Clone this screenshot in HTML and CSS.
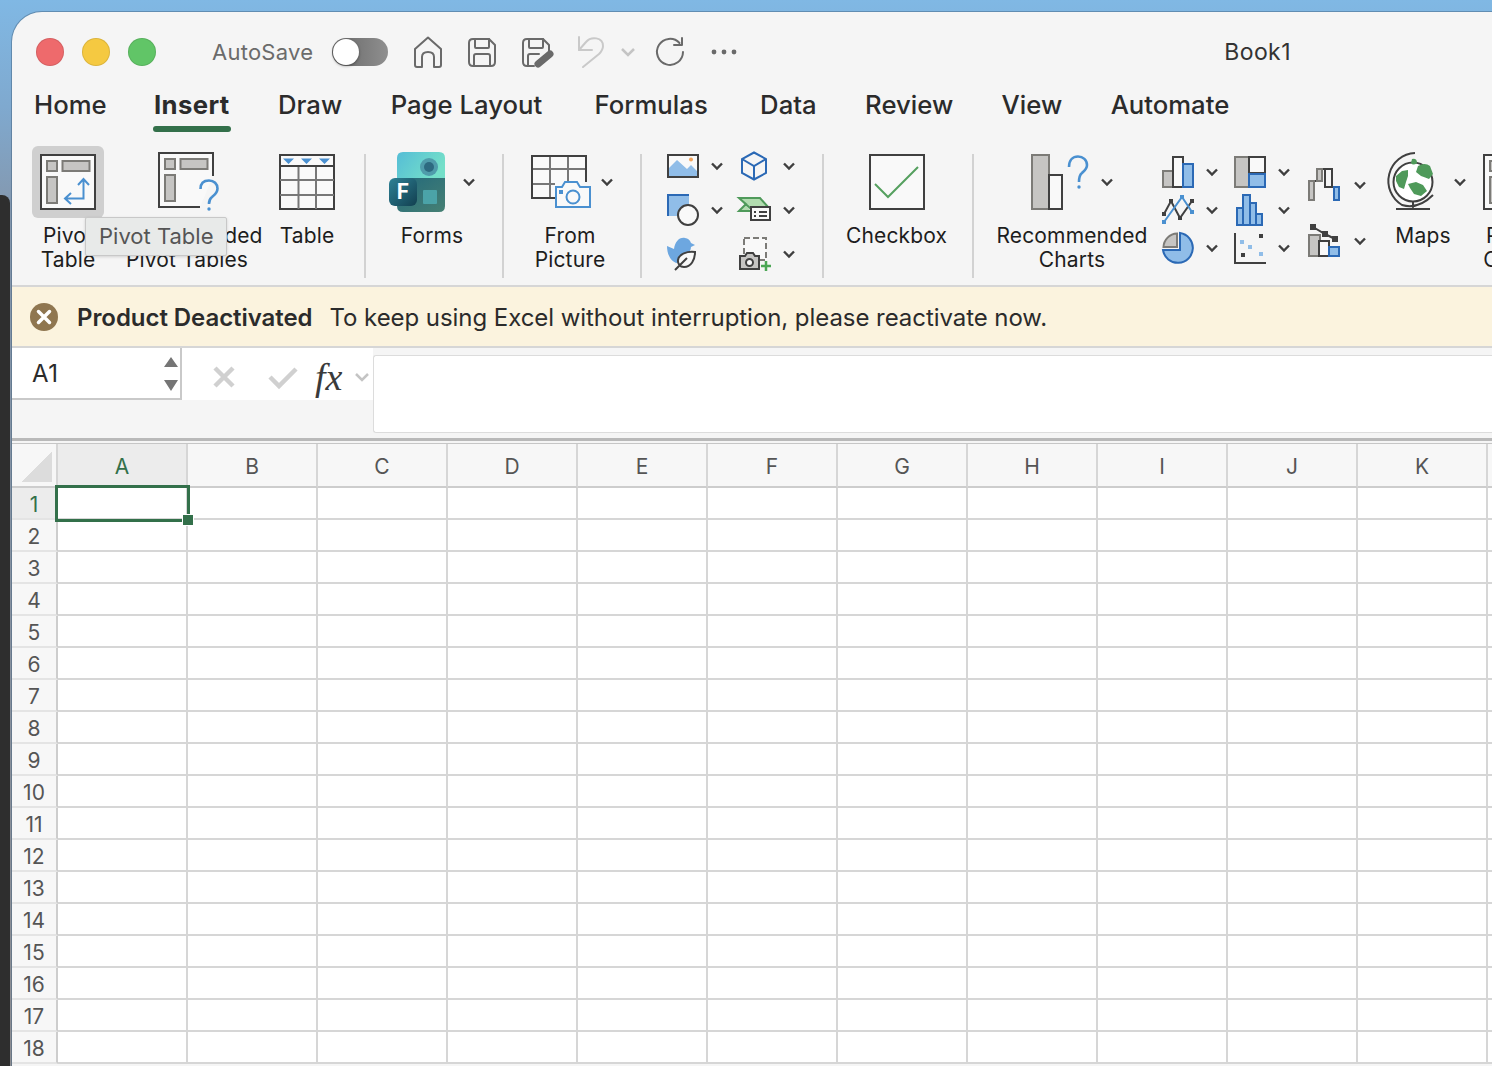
FILE: index.html
```html
<!DOCTYPE html>
<html lang="en">
<head>
    <meta charset="UTF-8">
    <title>Book1</title>
    <link rel="stylesheet" href="styles.css">
</head>
<body>
    <div class="dock-edge"></div>
    <div class="window">
        <div class="titlebar">
            <span class="light red"></span>
            <span class="light yellow"></span>
            <span class="light green"></span>
            <span class="autosave">AutoSave</span>
            <span class="toggle"><span class="knob"></span></span>
            <svg class="qa qa-home" width="30" height="32" viewBox="0 0 30 32"><path d="M2 13L15 1.500L28 13V29Q28 31 26 31H21V21Q21 16 15 16Q9 16 9 21V31H4Q2 31 2 29Z"/></svg>
            <svg class="qa qa-save" width="30" height="30" viewBox="0 0 30 30"><path d="M6 2H22L28 8V25Q28 29 24 29H6Q2 29 2 25V6Q2 2 6 2Z"/><path d="M8 2V10Q8 11 9 11H21Q22 11 22 10V2M7 29V19Q7 17 9 17H21Q23 17 23 19V29"/></svg>
            <svg class="qa qa-saveas" width="32" height="30" viewBox="0 0 32 30"><path d="M6 2H22L28 8V14M13 29H6Q2 29 2 25V6Q2 2 6 2"/><path d="M8 2V10Q8 11 9 11H21Q22 11 22 10V2M7 29V19Q7 17 9 17H18"/><path class="pen" d="M17 27L29 17"/></svg>
            <svg class="qa qa-undo" width="30" height="32" viewBox="0 0 30 32"><path d="M2 1V14H15"/><path d="M2 14L9 6C14 0 26 1 26 10C26 14 24 16 22 18L6 31"/></svg>
            <svg class="chev-light qa-undomore" width="16" height="10" viewBox="0 0 16 10"><path d="M2 2L8 8L14 2"/></svg>
            <svg class="qa qa-redo" width="30" height="30" viewBox="0 0 30 30"><path d="M24.500 6A13 13 0 1 0 28 15"/><path d="M27 1V8H19"/></svg>
            <svg class="qa-more" width="28" height="6" viewBox="0 0 28 6"><circle cx="4" cy="3" r="2.400"/><circle cx="14" cy="3" r="2.400"/><circle cx="24" cy="3" r="2.400"/></svg>
            <span class="doc-title">Book1</span>
        </div>

        <nav class="tabs">
            <span class="tab">Home</span>
            <span class="tab active">Insert</span>
            <span class="tab">Draw</span>
            <span class="tab">Page Layout</span>
            <span class="tab tab-wide">Formulas</span>
            <span class="tab tab-wide">Data</span>
            <span class="tab">Review</span>
            <span class="tab">View</span>
            <span class="tab">Automate</span>
        </nav>

        <div class="ribbon">
            <div class="group group-tables">
                <div class="btn btn-pivot">
                    <div class="btn-icon hovered">
                        <svg width="56" height="56" viewBox="0 0 56 56">
                            <rect class="frame" x="1" y="1" width="54" height="54"/>
                            <rect class="block" x="7" y="7" width="10" height="10"/>
                            <rect class="block" x="22.500" y="7" width="27" height="10"/>
                            <rect class="block" x="7" y="23" width="10" height="26"/>
                            <path class="blue-line" d="M43.500 26V44.500H26M38 31L43.500 25L49 31M31 39L25 44.500L31 50"/>
                        </svg>
                    </div>
                    <div class="label">Pivot<br>Table</div>
                </div>
                <div class="btn btn-rec-pivot">
                    <div class="btn-icon">
                        <svg width="62" height="60" viewBox="0 0 62 60">
                            <path class="frame" d="M42 55H1V1H55V24"/>
                            <rect class="block" x="7" y="7" width="10" height="10"/>
                            <rect class="block" x="22.500" y="7" width="27" height="10"/>
                            <rect class="block" x="7" y="23" width="10" height="26"/>
                            <path class="blue-line thick" d="M42.500 37C42.500 31 46 28.500 51 28.500C56 28.500 59.500 32 59.500 36.500C59.500 41 56.500 43 54 45C52 46.500 51 48.500 51 52"/>
                            <circle class="blue-dot" cx="51" cy="57" r="1.700"/>
                        </svg>
                    </div>
                    <div class="label">Recommended<br>Pivot Tables</div>
                </div>
                <div class="btn btn-table">
                    <div class="btn-icon">
                        <svg width="56" height="56" viewBox="0 0 56 56">
                            <rect class="frame" x="1" y="1" width="54" height="54"/>
                            <path class="grid-line" d="M19.500 12V55M37 12V55M1 26H55M1 41H55"/>
                            <path class="frame" d="M1 12H55"/>
                            <path class="blue-dot" d="M4 4.500H15L9.500 10ZM22 4.500H33L27.500 10ZM40 4.500H51L45.500 10Z"/>
                        </svg>
                    </div>
                    <div class="label">Table</div>
                </div>
            </div>
            <div class="sep"></div>

            <div class="group group-forms">
                <div class="btn">
                    <div class="btn-icon with-chev">
                        <svg width="56" height="60" viewBox="0 0 56 60">
                            <defs>
                                <linearGradient id="formsTop" x1="0" y1="0" x2="1" y2="0.4"><stop offset="0" stop-color="#55bdd6"/><stop offset="1" stop-color="#74dfc9"/></linearGradient>
                                <linearGradient id="formsBottom" x1="0" y1="0" x2="1" y2="1"><stop offset="0" stop-color="#23697c"/><stop offset="1" stop-color="#468073"/></linearGradient>
                                <linearGradient id="formsTile" x1="0" y1="0" x2="1" y2="1"><stop offset="0" stop-color="#2e8296"/><stop offset="1" stop-color="#123f50"/></linearGradient>
                            </defs>
                            <path fill="url(#formsBottom)" d="M8 26H56V54Q56 60 50 60H14Q8 60 8 54Z"/>
                            <path fill="url(#formsTop)" d="M14 0H50Q56 0 56 6V26H8V6Q8 0 14 0Z"/>
                            <circle cx="40" cy="15" r="9" fill="#4f9cab"/>
                            <circle cx="40" cy="15" r="5" fill="#2d6a80"/>
                            <rect x="34" y="38" width="14" height="14" rx="1" fill="#4ba3a8"/>
                            <rect x="0" y="26" width="28" height="28" rx="6" fill="url(#formsTile)"/>
                            <text class="forms-letter" x="14" y="47" text-anchor="middle">F</text>
                        </svg>
                        <svg class="chev" width="12" height="8" viewBox="0 0 12 8"><path d="M1 1.500L6 6.500L11 1.500"/></svg>
                    </div>
                    <div class="label">Forms</div>
                </div>
            </div>
            <div class="sep"></div>

            <div class="group group-picture">
                <div class="btn">
                    <div class="btn-icon with-chev chev-near">
                        <svg width="60" height="54" viewBox="0 0 60 54">
                            <path class="frame" d="M24 43H1V1H55V27"/>
                            <path class="grid-line" d="M19 2V42M37 2V27M2 14H54M2 29H24"/>
                            <path class="frame-line" d="M24 43H1V1H55V27"/>
                            <path class="camera" d="M25 32H31L34 27H46L49 32H59V52H25Z"/>
                            <circle class="camera" cx="42" cy="42" r="6.500"/>
                            <rect class="blue-dot" x="28" y="35" width="4" height="4"/>
                        </svg>
                        <svg class="chev" width="12" height="8" viewBox="0 0 12 8"><path d="M1 1.500L6 6.500L11 1.500"/></svg>
                    </div>
                    <div class="label">From<br>Picture</div>
                </div>
            </div>
            <div class="sep"></div>

            <div class="group group-media">
                <div class="mini">
                    <svg width="32" height="32" viewBox="0 0 32 32">
                        <rect class="frame" x="1" y="5" width="30" height="22"/>
                        <path class="blue-fill" d="M2 25V18L10 10L20 19L24 15L30 21V26H2Z"/>
                        <circle class="orange" cx="24" cy="9.500" r="2"/>
                    </svg>
                    <svg class="chev" width="12" height="8" viewBox="0 0 12 8"><path d="M1 1.500L6 6.500L11 1.500"/></svg>
                </div>
                <div class="mini">
                    <svg width="32" height="32" viewBox="0 0 32 32">
                        <path class="blue-line dark" d="M15 2.500L27 9V23L15 29.500L3 23V9ZM3 9L15 16L27 9M15 16V29.500"/>
                    </svg>
                    <svg class="chev" width="12" height="8" viewBox="0 0 12 8"><path d="M1 1.500L6 6.500L11 1.500"/></svg>
                </div>
                <div class="mini">
                    <svg width="32" height="32" viewBox="0 0 32 32">
                        <path class="blue-fill" d="M1 1H22V22H1Z"/>
                        <path class="blue-line dark" d="M1 22V1H22"/>
                        <circle class="frame" cx="21" cy="21" r="10"/>
                    </svg>
                    <svg class="chev" width="12" height="8" viewBox="0 0 12 8"><path d="M1 1.500L6 6.500L11 1.500"/></svg>
                </div>
                <div class="mini">
                    <svg width="32" height="32" viewBox="0 0 32 32">
                        <path class="green-fill" d="M0 4H21L30 14H11ZM0 4L7 10L0 17H12"/>
                        <rect class="frame" x="12" y="13" width="19" height="13"/>
                        <path class="frame" d="M15 18H17M20 18H28M15 22H17M20 22H28"/>
                    </svg>
                    <svg class="chev" width="12" height="8" viewBox="0 0 12 8"><path d="M1 1.500L6 6.500L11 1.500"/></svg>
                </div>
                <div class="mini">
                    <svg width="32" height="34" viewBox="0 0 32 34">
                        <path class="blue-solid" d="M0 9L7 12C8 5 12 0 18 1C21 1.500 23 3 24 6L28 8L24 10C24 13 22 16 19 18L10 26C5 25 0 19 0 9Z"/>
                        <path class="leaf" d="M28 15C20 14 12 17 11 23C10.500 27 13 30 17 30C24 30 28 23 28 15ZM8 33L20 21"/>
                    </svg>
                    <svg class="chev hidden" width="12" height="8" viewBox="0 0 12 8"><path d="M1 1.500L6 6.500L11 1.500"/></svg>
                </div>
                <div class="mini">
                    <svg width="32" height="34" viewBox="0 0 32 34">
                        <rect class="dashed" x="5" y="1" width="22" height="22"/>
                        <path class="gray-cam" d="M1 19H6L8 16H14L16 19H20V32H1Z"/>
                        <circle class="frame" cx="10.500" cy="25.500" r="3.500"/>
                        <path class="plus" d="M22 29H32M27 24V34"/>
                    </svg>
                    <svg class="chev" width="12" height="8" viewBox="0 0 12 8"><path d="M1 1.500L6 6.500L11 1.500"/></svg>
                </div>
            </div>
            <div class="sep"></div>

            <div class="group group-checkbox">
                <div class="btn">
                    <div class="btn-icon">
                        <svg width="56" height="56" viewBox="0 0 56 56">
                            <rect class="frame" x="1" y="1" width="54" height="54"/>
                            <path class="check" d="M6 30L19 43L49 13"/>
                        </svg>
                    </div>
                    <div class="label">Checkbox</div>
                </div>
            </div>
            <div class="sep"></div>

            <div class="group group-charts">
                <div class="btn btn-rec-charts">
                    <div class="btn-icon with-chev chev-close">
                        <svg width="59" height="56" viewBox="0 0 59 56">
                            <rect class="block" x="1" y="1" width="17" height="54"/>
                            <rect class="frame" x="18" y="21" width="13" height="34"/>
                            <path class="blue-line thick" d="M38 13C38 6 42 2.500 47 2.500C52 2.500 56 6 56 11C56 15 53 17 51 19C49 20.500 48 22.500 48 28"/>
                            <circle class="blue-dot" cx="48" cy="33" r="1.700"/>
                        </svg>
                        <svg class="chev" width="12" height="8" viewBox="0 0 12 8"><path d="M1 1.500L6 6.500L11 1.500"/></svg>
                    </div>
                    <div class="label">Recommended<br>Charts</div>
                </div>
                <div class="chart-grid">
                    <div class="mini">
                        <svg width="32" height="32" viewBox="0 0 32 32">
                            <rect class="block" x="1" y="15" width="10" height="16"/>
                            <rect class="frame" x="11" y="1" width="10" height="30"/>
                            <rect class="blue-box" x="21" y="8" width="10" height="23"/>
                        </svg>
                        <svg class="chev" width="12" height="8" viewBox="0 0 12 8"><path d="M1 1.500L6 6.500L11 1.500"/></svg>
                    </div>
                    <div class="mini">
                        <svg width="32" height="32" viewBox="0 0 32 32">
                            <rect class="block" x="1" y="1" width="14" height="30"/>
                            <rect class="frame" x="15" y="1" width="16" height="16"/>
                            <rect class="blue-box" x="15" y="18" width="16" height="13"/>
                        </svg>
                        <svg class="chev" width="12" height="8" viewBox="0 0 12 8"><path d="M1 1.500L6 6.500L11 1.500"/></svg>
                    </div>
                    <div class="mini">
                        <svg width="32" height="32" viewBox="0 0 32 32">
                            <path class="frame-line" d="M2 20L9 7L18 24L30 7"/>
                            <path class="blue-line" d="M2 28L20 3L30 18"/>
                            <path class="dark-dots" d="M0 18h4v4h-4zM7 5h4v4h-4zM16 22h4v4h-4zM28 5h4v4h-4z"/>
                            <path class="blue-dot" d="M0 26h4v4h-4zM18 1h4v4h-4zM28 16h4v4h-4z"/>
                        </svg>
                        <svg class="chev" width="12" height="8" viewBox="0 0 12 8"><path d="M1 1.500L6 6.500L11 1.500"/></svg>
                    </div>
                    <div class="mini">
                        <svg width="32" height="32" viewBox="0 0 32 32">
                            <rect class="blue-box" x="3" y="14" width="6" height="17"/>
                            <rect class="blue-box" x="9" y="1" width="7" height="30"/>
                            <rect class="blue-box" x="16" y="9" width="6" height="22"/>
                            <rect class="blue-box" x="22" y="20" width="6" height="11"/>
                        </svg>
                        <svg class="chev" width="12" height="8" viewBox="0 0 12 8"><path d="M1 1.500L6 6.500L11 1.500"/></svg>
                    </div>
                    <div class="mini">
                        <svg width="32" height="32" viewBox="0 0 32 32">
                            <path class="blue-box" d="M18 1A15 15 0 1 1 1 18H18Z"/>
                            <path class="block" d="M15 1.500A14 14 0 0 0 1.500 15H15Z"/>
                        </svg>
                        <svg class="chev" width="12" height="8" viewBox="0 0 12 8"><path d="M1 1.500L6 6.500L11 1.500"/></svg>
                    </div>
                    <div class="mini">
                        <svg width="32" height="32" viewBox="0 0 32 32">
                            <path class="frame-line" d="M1 1V31H32"/>
                            <path class="dark-dots" d="M25 2h4v4h-4zM7 21h4v4h-4z"/>
                            <path class="pale-dots" d="M6 8h4v4h-4zM14 13h4v4h-4zM25 20h4v4h-4z"/>
                        </svg>
                        <svg class="chev" width="12" height="8" viewBox="0 0 12 8"><path d="M1 1.500L6 6.500L11 1.500"/></svg>
                    </div>
                </div>
                <div class="chart-col">
                    <div class="mini">
                        <svg width="32" height="34" viewBox="0 0 32 34">
                            <path class="frame-line" d="M6 13H9M14 1H17M24 19H26"/>
                            <rect class="block" x="1" y="13" width="5" height="19"/>
                            <rect class="block" x="9" y="1" width="5" height="12"/>
                            <rect class="frame-line" x="17" y="1" width="7" height="18"/>
                            <rect class="blue-box" x="26" y="19" width="5" height="13"/>
                        </svg>
                        <svg class="chev" width="12" height="8" viewBox="0 0 12 8"><path d="M1 1.500L6 6.500L11 1.500"/></svg>
                    </div>
                    <div class="mini">
                        <svg width="32" height="34" viewBox="0 0 32 34">
                            <path class="frame-line" d="M5 3L17 10L27 15"/>
                            <path class="dark-dots" d="M2 0h6v6h-6zM14 7h6v6h-6zM24 12h6v6h-6z"/>
                            <rect class="block" x="1" y="11" width="11" height="21"/>
                            <rect class="frame" x="11" y="17" width="10" height="15"/>
                            <rect class="blue-box" x="21" y="23" width="10" height="9"/>
                        </svg>
                        <svg class="chev" width="12" height="8" viewBox="0 0 12 8"><path d="M1 1.500L6 6.500L11 1.500"/></svg>
                    </div>
                </div>
                <div class="btn btn-maps">
                    <div class="btn-icon with-chev">
                        <svg width="48" height="60" viewBox="0 0 48 60">
                            <circle class="globe" cx="25" cy="30" r="19.500"/>
                            <path class="land" d="M8 24L14 19L20 18L20 24L18 30L16 37L11 35L8 29ZM24 7Q29 6 29 11Q25 14 23 11ZM30 14Q37 10 42 14L45 22L41 27Q36 25 33 24L28 20ZM20 32L28 30L35 33L39 39L33 44L26 42L22 36Z"/>
                            <path class="frame-line" d="M27 1A28 28 0 0 0 14 53C24 56 35 53 45 43M25 49V57M8 57H42"/>
                        </svg>
                        <svg class="chev" width="12" height="8" viewBox="0 0 12 8"><path d="M1 1.500L6 6.500L11 1.500"/></svg>
                    </div>
                    <div class="label">Maps</div>
                </div>
                <div class="btn btn-pchart">
                    <div class="btn-icon">
                        <svg width="56" height="56" viewBox="0 0 56 56">
                            <rect class="frame" x="1" y="1" width="54" height="54"/>
                            <rect class="block" x="7" y="7" width="10" height="10"/>
                            <rect class="block" x="7" y="23" width="10" height="26"/>
                        </svg>
                    </div>
                    <div class="label">Pivot<br>Chart</div>
                </div>
            </div>
        </div>

        <div class="tooltip">Pivot Table</div>

        <div class="banner">
            <svg width="28" height="28" viewBox="0 0 28 28">
                <circle cx="14" cy="14" r="14" fill="#8f7650"/>
                <path class="banner-x" d="M8.500 8.500L19.500 19.500M19.500 8.500L8.500 19.500"/>
            </svg>
            <strong class="banner-title">Product Deactivated</strong>
            <span class="banner-text">To keep using Excel without interruption, please reactivate now.</span>
        </div>

        <div class="formula-bar">
            <div class="formula-left">
                <div class="formula-top">
                    <div class="name-box">
                        <span>A1</span>
                        <svg class="spin" width="14" height="34" viewBox="0 0 14 34"><path d="M7 0L14 10H0ZM0 23H14L7 34Z"/></svg>
                    </div>
                    <div class="formula-btns">
                        <svg class="fb-icon" width="24" height="24" viewBox="0 0 24 24"><path d="M3 3L21 21M21 3L3 21"/></svg>
                        <svg class="fb-icon" width="30" height="24" viewBox="0 0 30 24"><path d="M2 12L11 21L28 4"/></svg>
                        <span class="fx">fx</span>
                        <svg class="chev-light" width="16" height="10" viewBox="0 0 16 10"><path d="M2 2L8 8L14 2"/></svg>
                    </div>
                </div>
            </div>
            <div class="formula-input"></div>
        </div>

        <table class="sheet">
            <colgroup>
                <col class="col-head">
                <col class="col-cell"><col class="col-cell"><col class="col-cell"><col class="col-cell"><col class="col-cell"><col class="col-cell">
                <col class="col-cell"><col class="col-cell"><col class="col-cell"><col class="col-cell"><col class="col-cell"><col class="col-cell">
            </colgroup>
            <thead>
                <tr>
                    <th class="corner"><span class="corner-mark"></span></th>
                    <th class="sel">A</th><th>B</th><th>C</th><th>D</th><th>E</th><th>F</th><th>G</th><th>H</th><th>I</th><th>J</th><th>K</th><th></th>
                </tr>
            </thead>
            <tbody>
                <tr><th class="sel">1</th><td class="current"><span class="cursor"><span class="handle"></span></span></td><td></td><td></td><td></td><td></td><td></td><td></td><td></td><td></td><td></td><td></td><td></td></tr>
                <tr><th>2</th><td></td><td></td><td></td><td></td><td></td><td></td><td></td><td></td><td></td><td></td><td></td><td></td></tr>
                <tr><th>3</th><td></td><td></td><td></td><td></td><td></td><td></td><td></td><td></td><td></td><td></td><td></td><td></td></tr>
                <tr><th>4</th><td></td><td></td><td></td><td></td><td></td><td></td><td></td><td></td><td></td><td></td><td></td><td></td></tr>
                <tr><th>5</th><td></td><td></td><td></td><td></td><td></td><td></td><td></td><td></td><td></td><td></td><td></td><td></td></tr>
                <tr><th>6</th><td></td><td></td><td></td><td></td><td></td><td></td><td></td><td></td><td></td><td></td><td></td><td></td></tr>
                <tr><th>7</th><td></td><td></td><td></td><td></td><td></td><td></td><td></td><td></td><td></td><td></td><td></td><td></td></tr>
                <tr><th>8</th><td></td><td></td><td></td><td></td><td></td><td></td><td></td><td></td><td></td><td></td><td></td><td></td></tr>
                <tr><th>9</th><td></td><td></td><td></td><td></td><td></td><td></td><td></td><td></td><td></td><td></td><td></td><td></td></tr>
                <tr><th>10</th><td></td><td></td><td></td><td></td><td></td><td></td><td></td><td></td><td></td><td></td><td></td><td></td></tr>
                <tr><th>11</th><td></td><td></td><td></td><td></td><td></td><td></td><td></td><td></td><td></td><td></td><td></td><td></td></tr>
                <tr><th>12</th><td></td><td></td><td></td><td></td><td></td><td></td><td></td><td></td><td></td><td></td><td></td><td></td></tr>
                <tr><th>13</th><td></td><td></td><td></td><td></td><td></td><td></td><td></td><td></td><td></td><td></td><td></td><td></td></tr>
                <tr><th>14</th><td></td><td></td><td></td><td></td><td></td><td></td><td></td><td></td><td></td><td></td><td></td><td></td></tr>
                <tr><th>15</th><td></td><td></td><td></td><td></td><td></td><td></td><td></td><td></td><td></td><td></td><td></td><td></td></tr>
                <tr><th>16</th><td></td><td></td><td></td><td></td><td></td><td></td><td></td><td></td><td></td><td></td><td></td><td></td></tr>
                <tr><th>17</th><td></td><td></td><td></td><td></td><td></td><td></td><td></td><td></td><td></td><td></td><td></td><td></td></tr>
                <tr><th>18</th><td></td><td></td><td></td><td></td><td></td><td></td><td></td><td></td><td></td><td></td><td></td><td></td></tr>
            </tbody>
        </table>
    </div>
</body>
</html>
```

FILE: styles.css
```css
* {
    box-sizing: border-box;
}
html, body {
    height: 100%;
}
body {
    margin: 0;
    padding: 12px 0 0 12px;
    overflow: hidden;
    font-family: Inter, "Open Sans", sans-serif;
    background: linear-gradient(180deg, #80b8e4 0%, #7fa9cf 10%, #8497ad 20%, #8f8f93 100%);
}
svg {
    display: block;
    flex-shrink: 0;
    overflow: visible;
    fill: none;
}
.dock-edge {
    position: absolute;
    left: 0;
    top: 195px;
    bottom: 0;
    width: 10px;
    background: #2e2e2e;
    border-top-right-radius: 8px;
}
.window {
    position: relative;
    height: 1054px;
    overflow: hidden;
    background: #f5f5f5;
    border-top-left-radius: 30px;
    box-shadow: 0 0 0 1px rgba(60, 90, 120, 0.45);
}

/* title bar */
.titlebar {
    display: flex;
    align-items: center;
    height: 68px;
    padding: 12px 0 0 24px;
}
.light {
    width: 28px;
    height: 28px;
    margin-right: 18px;
    border-radius: 50%;
    border: 1px solid rgba(0, 0, 0, 0.1);
}
.red { background: #ee6a6c; }
.yellow { background: #f5c941; }
.green { background: #61c567; }
.autosave {
    margin-left: 38px;
    font-size: 22px;
    letter-spacing: 0.25px;
    color: #6b6b6b;
}
.toggle {
    display: block;
    width: 56px;
    height: 28px;
    margin-left: 19px;
    padding: 1px;
    border-radius: 14px;
    background: linear-gradient(90deg, #666 0%, #8f8f8f 100%);
}
.knob {
    display: block;
    width: 26px;
    height: 26px;
    border-radius: 50%;
    background: #fff;
    box-shadow: 0 1px 3px rgba(0, 0, 0, 0.4);
}
.qa path {
    stroke: #6a6a6a;
    stroke-width: 2;
    stroke-linejoin: round;
    stroke-linecap: round;
}
.qa .pen {
    stroke-width: 7;
}
.qa-home { margin-left: 25px; }
.qa-save { margin-left: 24px; }
.qa-saveas { margin-left: 24px; }
.qa-undo { margin-left: 24px; }
.qa-undo path { stroke: #c9c9c9; }
.qa-undomore { margin-left: 13px; }
.qa-redo { margin-left: 19px; }
.qa-more {
    margin-left: 25px;
    fill: #6a6a6a;
}
.doc-title {
    margin-left: 486px;
    font-size: 23px;
    letter-spacing: 0.4px;
    color: #333;
}
.chev-light path {
    stroke: #c4c4c4;
    stroke-width: 2.500;
}

/* tabs */
.tabs {
    display: flex;
    gap: 48.400px;
    height: 52px;
    padding-left: 22px;
}
.tab {
    height: 52px;
    padding-top: 9px;
    font-size: 25.700px;
    font-weight: 500;
    color: #2b2b2b;
    white-space: nowrap;
}
.tab-wide {
    margin-left: 4px;
}
.tab.active {
    margin-left: -1px;
    font-weight: 700;
    letter-spacing: 0.4px;
    position: relative;
}
.tab.active::after {
    content: "";
    position: absolute;
    left: -1px;
    right: -1px;
    bottom: 0;
    height: 6px;
    border-radius: 3px;
    background: #33704a;
}

/* ribbon */
.ribbon {
    display: flex;
    height: 155px;
    padding-top: 12px;
    overflow: hidden;
    border-bottom: 2px solid #d6d6d6;
}
.group {
    display: flex;
    flex-shrink: 0;
    align-items: flex-start;
}
.sep {
    flex-shrink: 0;
    width: 2px;
    height: 124px;
    margin-top: 10px;
    background: #d2d2d2;
}
.btn {
    display: flex;
    flex-shrink: 0;
    flex-direction: column;
    align-items: center;
    margin-top: 2px;
}
.btn-icon {
    display: flex;
    align-items: center;
    justify-content: center;
    height: 72px;
}
.btn-icon.with-chev {
    gap: 18px;
}
.btn-icon.chev-near {
    gap: 10px;
}
.btn-icon.chev-close {
    gap: 11px;
}
.hovered {
    width: 72px;
    border-radius: 6px;
    background: #cfcfcf;
}
.label {
    margin-top: 6px;
    font-size: 21px;
    line-height: 24px;
    letter-spacing: 0.15px;
    text-align: center;
    white-space: nowrap;
    color: #1d1d1d;
}
.group-tables {
    width: 352px;
    padding-left: 20px;
}
.btn-pivot { width: 72px; }
.btn-rec-pivot {
    width: 150px;
    margin-left: 8px;
}
.btn-rec-pivot svg {
    margin-left: 4px;
}
.btn-table {
    width: 56px;
    margin-left: 17px;
}
.group-forms {
    width: 136px;
    padding-left: 23px;
}
.group-picture {
    width: 136px;
    padding-left: 27px;
}
.group-picture .label {
    margin-left: -4px;
}
.group-media {
    display: grid;
    grid-template-columns: 56px 56px;
    grid-auto-rows: 44px;
    column-gap: 16px;
    align-items: center;
    width: 180px;
    padding-left: 25px;
}
.mini {
    display: flex;
    align-items: center;
    gap: 12px;
}
.hidden {
    visibility: hidden;
}
.group-checkbox {
    width: 148px;
    padding-left: 22px;
}
.group-charts {
    padding-left: 23px;
}
.btn-rec-charts {
    width: 150px;
}
.chart-grid {
    display: grid;
    flex-shrink: 0;
    grid-template-columns: 56px 56px;
    grid-auto-rows: 38px;
    column-gap: 16px;
    margin-left: 15px;
    padding-top: 9px;
}
.chart-col {
    display: flex;
    flex-shrink: 0;
    flex-direction: column;
    gap: 22px;
    margin-left: 18px;
    padding-top: 24px;
}
.chart-col .mini {
    gap: 14px;
}
.btn-maps {
    margin-left: 22px;
}
.btn-maps .label {
    margin-left: -8px;
}
.btn-pchart {
    width: 60px;
    margin-left: 15px;
}

/* icon parts */
.chev path {
    stroke: #3f3f3f;
    stroke-width: 2.400;
}
.frame {
    fill: #f9f9f9;
    stroke: #404040;
    stroke-width: 2;
}
.frame-line {
    stroke: #404040;
    stroke-width: 2;
}
.block {
    fill: #c6c5c3;
    stroke: #7c7b77;
    stroke-width: 2;
}
.grid-line {
    stroke: #777;
    stroke-width: 2;
}
.blue-line {
    stroke: #4a90d0;
    stroke-width: 2;
}
.blue-line.thick {
    stroke-width: 2.600;
}
.blue-line.dark {
    stroke: #2b69b5;
}
.blue-dot {
    fill: #4a90d0;
}
.blue-fill {
    fill: #90bde8;
}
.blue-solid {
    fill: #6da7e0;
}
.blue-box {
    fill: #90bde8;
    stroke: #2b69b5;
    stroke-width: 2;
}
.orange {
    fill: #f3a45c;
}
.camera {
    fill: #f9f9f9;
    stroke: #4a90d0;
    stroke-width: 2;
}
.green-fill {
    fill: #b2dcb0;
    stroke: #4f9a5a;
    stroke-width: 2;
}
.leaf {
    fill: #f9f9f9;
    stroke: #404040;
    stroke-width: 2;
}
.dashed {
    fill: #f9f9f9;
    stroke: #7c7b77;
    stroke-width: 2;
    stroke-dasharray: 6 3;
}
.gray-cam {
    fill: #c6c5c3;
    stroke: #404040;
    stroke-width: 2;
}
.plus {
    stroke: #4ba654;
    stroke-width: 2.500;
}
.check {
    stroke: #55a05f;
    stroke-width: 2;
}
.dark-dots {
    fill: #404040;
}
.pale-dots {
    fill: #90bde8;
}
.globe {
    fill: #fff;
    stroke: #404040;
    stroke-width: 2;
}
.land {
    fill: #4f9a5a;
}
.forms-letter {
    font-size: 21px;
    font-weight: 700;
    fill: #fff;
}

/* tooltip */
.tooltip {
    position: absolute;
    left: 73px;
    top: 205px;
    width: 142px;
    height: 39px;
    padding-left: 13px;
    font-size: 22px;
    line-height: 37px;
    color: #555;
    background: #e8eae9;
    border: 1px solid #c8c8c8;
    border-radius: 2px;
    box-shadow: 0 1px 3px rgba(0, 0, 0, 0.15);
}

/* banner */
.banner {
    display: flex;
    align-items: center;
    height: 61px;
    padding: 1px 0 0 18px;
    font-size: 24px;
    letter-spacing: -0.06px;
    color: #2b2b2b;
    background: #fbf3de;
    border-bottom: 2px solid #d6d6d6;
    white-space: nowrap;
}
.banner-x {
    stroke: #fff;
    stroke-width: 3.500;
    stroke-linecap: round;
}
.banner-title {
    margin-left: 19px;
    font-weight: 600;
}
.banner-text {
    margin-left: 17px;
}

/* formula bar */
.formula-bar {
    display: flex;
    height: 93px;
    background: #f5f5f5;
    border-bottom: 3px solid #b9b9b9;
}
.formula-left {
    flex-shrink: 0;
    width: 361px;
}
.formula-top {
    display: flex;
    height: 52px;
    background: #fff;
}
.name-box {
    display: flex;
    align-items: center;
    justify-content: space-between;
    width: 170px;
    padding: 1px 2px 0 20px;
    font-size: 24px;
    letter-spacing: 0.5px;
    color: #2b2b2b;
    background: #fff;
    border-right: 2px solid #c9c9c9;
    border-bottom: 2px solid #c9c9c9;
}
.spin {
    fill: #757575;
}
.formula-btns {
    display: flex;
    align-items: center;
    flex: 1;
    padding: 5px 0 0 30px;
}
.fb-icon path {
    stroke: #d0d0d0;
    stroke-width: 4.500;
}
.fb-icon + .fb-icon {
    margin-left: 32px;
}
.fx {
    width: 30px;
    margin-left: 17px;
    font-family: "Liberation Serif", serif;
    font-size: 38px;
    line-height: 34px;
    font-style: italic;
    color: #3a3a3a;
}
.fx + .chev-light {
    margin-left: 9px;
}
.formula-input {
    flex: 1;
    height: 78px;
    margin-top: 7px;
    background: #fff;
    border: 1px solid #dcdcdc;
    border-right: none;
    border-radius: 3px 0 0 3px;
}

/* sheet */
.sheet {
    margin-top: 2px;
    border-collapse: separate;
    border-spacing: 0;
    table-layout: fixed;
    width: 1606px;
    background: #fff;
    border-top: 1px solid #c6c6c6;
}
.col-head { width: 46px; }
.col-cell { width: 130px; }
.sheet thead th {
    height: 44px;
    padding: 2px 0 0;
    font-size: 21px;
    font-weight: 400;
    color: #555;
    background: #f7f7f7;
    border-right: 2px solid #d6d6d6;
    border-bottom: 2px solid #cdcdcd;
}
.sheet tbody th {
    height: 32px;
    padding: 2px 0 0;
    font-size: 21px;
    font-weight: 400;
    color: #555;
    background: #f7f7f7;
    border-right: 2px solid #cdcdcd;
    border-bottom: 2px solid #e4e4e4;
}
.sheet td {
    height: 32px;
    padding: 0;
    border-right: 2px solid #d6d6d6;
    border-bottom: 2px solid #d6d6d6;
}
.sheet thead th.sel,
.sheet tbody th.sel {
    color: #33704a;
    background: #ececec;
}
.corner {
    position: relative;
}
.corner-mark {
    position: absolute;
    right: 4px;
    bottom: 4px;
    width: 30px;
    height: 30px;
    background: linear-gradient(135deg, transparent 50%, #dcdcdc 50%);
}
.current {
    position: relative;
}
.cursor {
    position: absolute;
    left: -3px;
    top: -3px;
    width: 135px;
    height: 37px;
    border: 3px solid #33704a;
}
.handle {
    position: absolute;
    right: -6px;
    bottom: -6px;
    width: 10px;
    height: 10px;
    background: #33704a;
    outline: 1px solid #fff;
}
```
